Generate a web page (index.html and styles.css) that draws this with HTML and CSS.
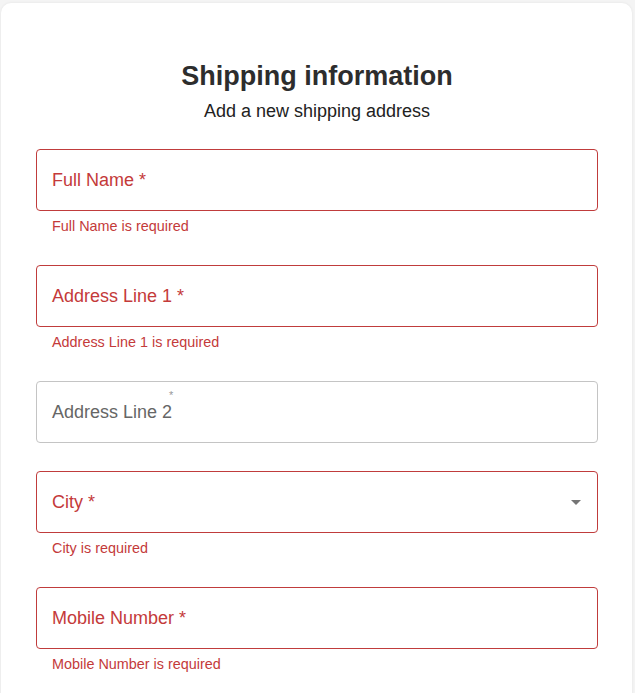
FILE: index.html
```html
<!DOCTYPE html>
<html>
<head>
<meta charset="utf-8">
<link rel="stylesheet" href="styles.css">
</head>
<body>
<div class="card">
  <h1 class="title">Shipping information</h1>
  <p class="subtitle">Add a new shipping address</p>
  <form class="form">
    <div class="field error">
      <div class="box"><span class="label">Full Name *</span></div>
      <div class="helper">Full Name is required</div>
    </div>
    <div class="field error">
      <div class="box"><span class="label">Address Line 1 *</span></div>
      <div class="helper">Address Line 1 is required</div>
    </div>
    <div class="field">
      <div class="box"><span class="label">Address Line 2</span><span class="ghost">*</span></div>
    </div>
    <div class="field error">
      <div class="box select"><span class="label">City *</span>
        <svg class="arrow" viewBox="0 0 24 24" width="24" height="24"><path d="M7 10l5 5 5-5z"/></svg>
      </div>
      <div class="helper">City is required</div>
    </div>
    <div class="field error">
      <div class="box"><span class="label">Mobile Number *</span></div>
      <div class="helper">Mobile Number is required</div>
    </div>
  </form>
</div>
</body>
</html>
```
FILE: styles.css
```css
html, body {
  margin: 0;
  padding: 0;
  background: #f4f4f4;
  font-family: "Liberation Sans", Arial, sans-serif;
}
.card {
  margin: 3px 3px 0 1px;
  width: 631px;
  background: #fff;
  border-radius: 10px 10px 0 0;
  box-shadow: 0 0 3px rgba(0, 0, 0, 0.07);
  padding: 57px 34px 40px 35px;
  box-sizing: border-box;
  min-height: 700px;
}
.title {
  margin: 0;
  text-align: center;
  font-size: 27px;
  line-height: 32px;
  font-weight: 700;
  color: #2d2d2d;
}
.subtitle {
  margin: 7px 0 0;
  text-align: center;
  font-size: 18px;
  line-height: 24px;
  color: #222;
}
.form {
  margin-top: 26px;
  display: flex;
  flex-direction: column;
  gap: 28px;
}
.field {
  display: flex;
  flex-direction: column;
}
.box {
  position: relative;
  height: 62px;
  box-sizing: border-box;
  border: 1px solid #c4c4c4;
  border-radius: 4px;
  display: flex;
  align-items: center;
  padding: 0 15px;
}
.label {
  font-size: 18px;
  color: #666;
}
.field.error .box {
  border-color: #c03c3c;
}
.field.error .label {
  color: #c43a3a;
}
.helper {
  margin-top: 4px;
  padding-left: 16px;
  font-size: 14.4px;
  line-height: 22px;
  color: #c43a3a;
}
.ghost {
  position: absolute;
  left: 132px;
  top: 7px;
  font-size: 11px;
  color: #999;
}
.arrow {
  position: absolute;
  right: 9px;
  top: 50%;
  transform: translateY(-50%);
  fill: #757575;
}
```
